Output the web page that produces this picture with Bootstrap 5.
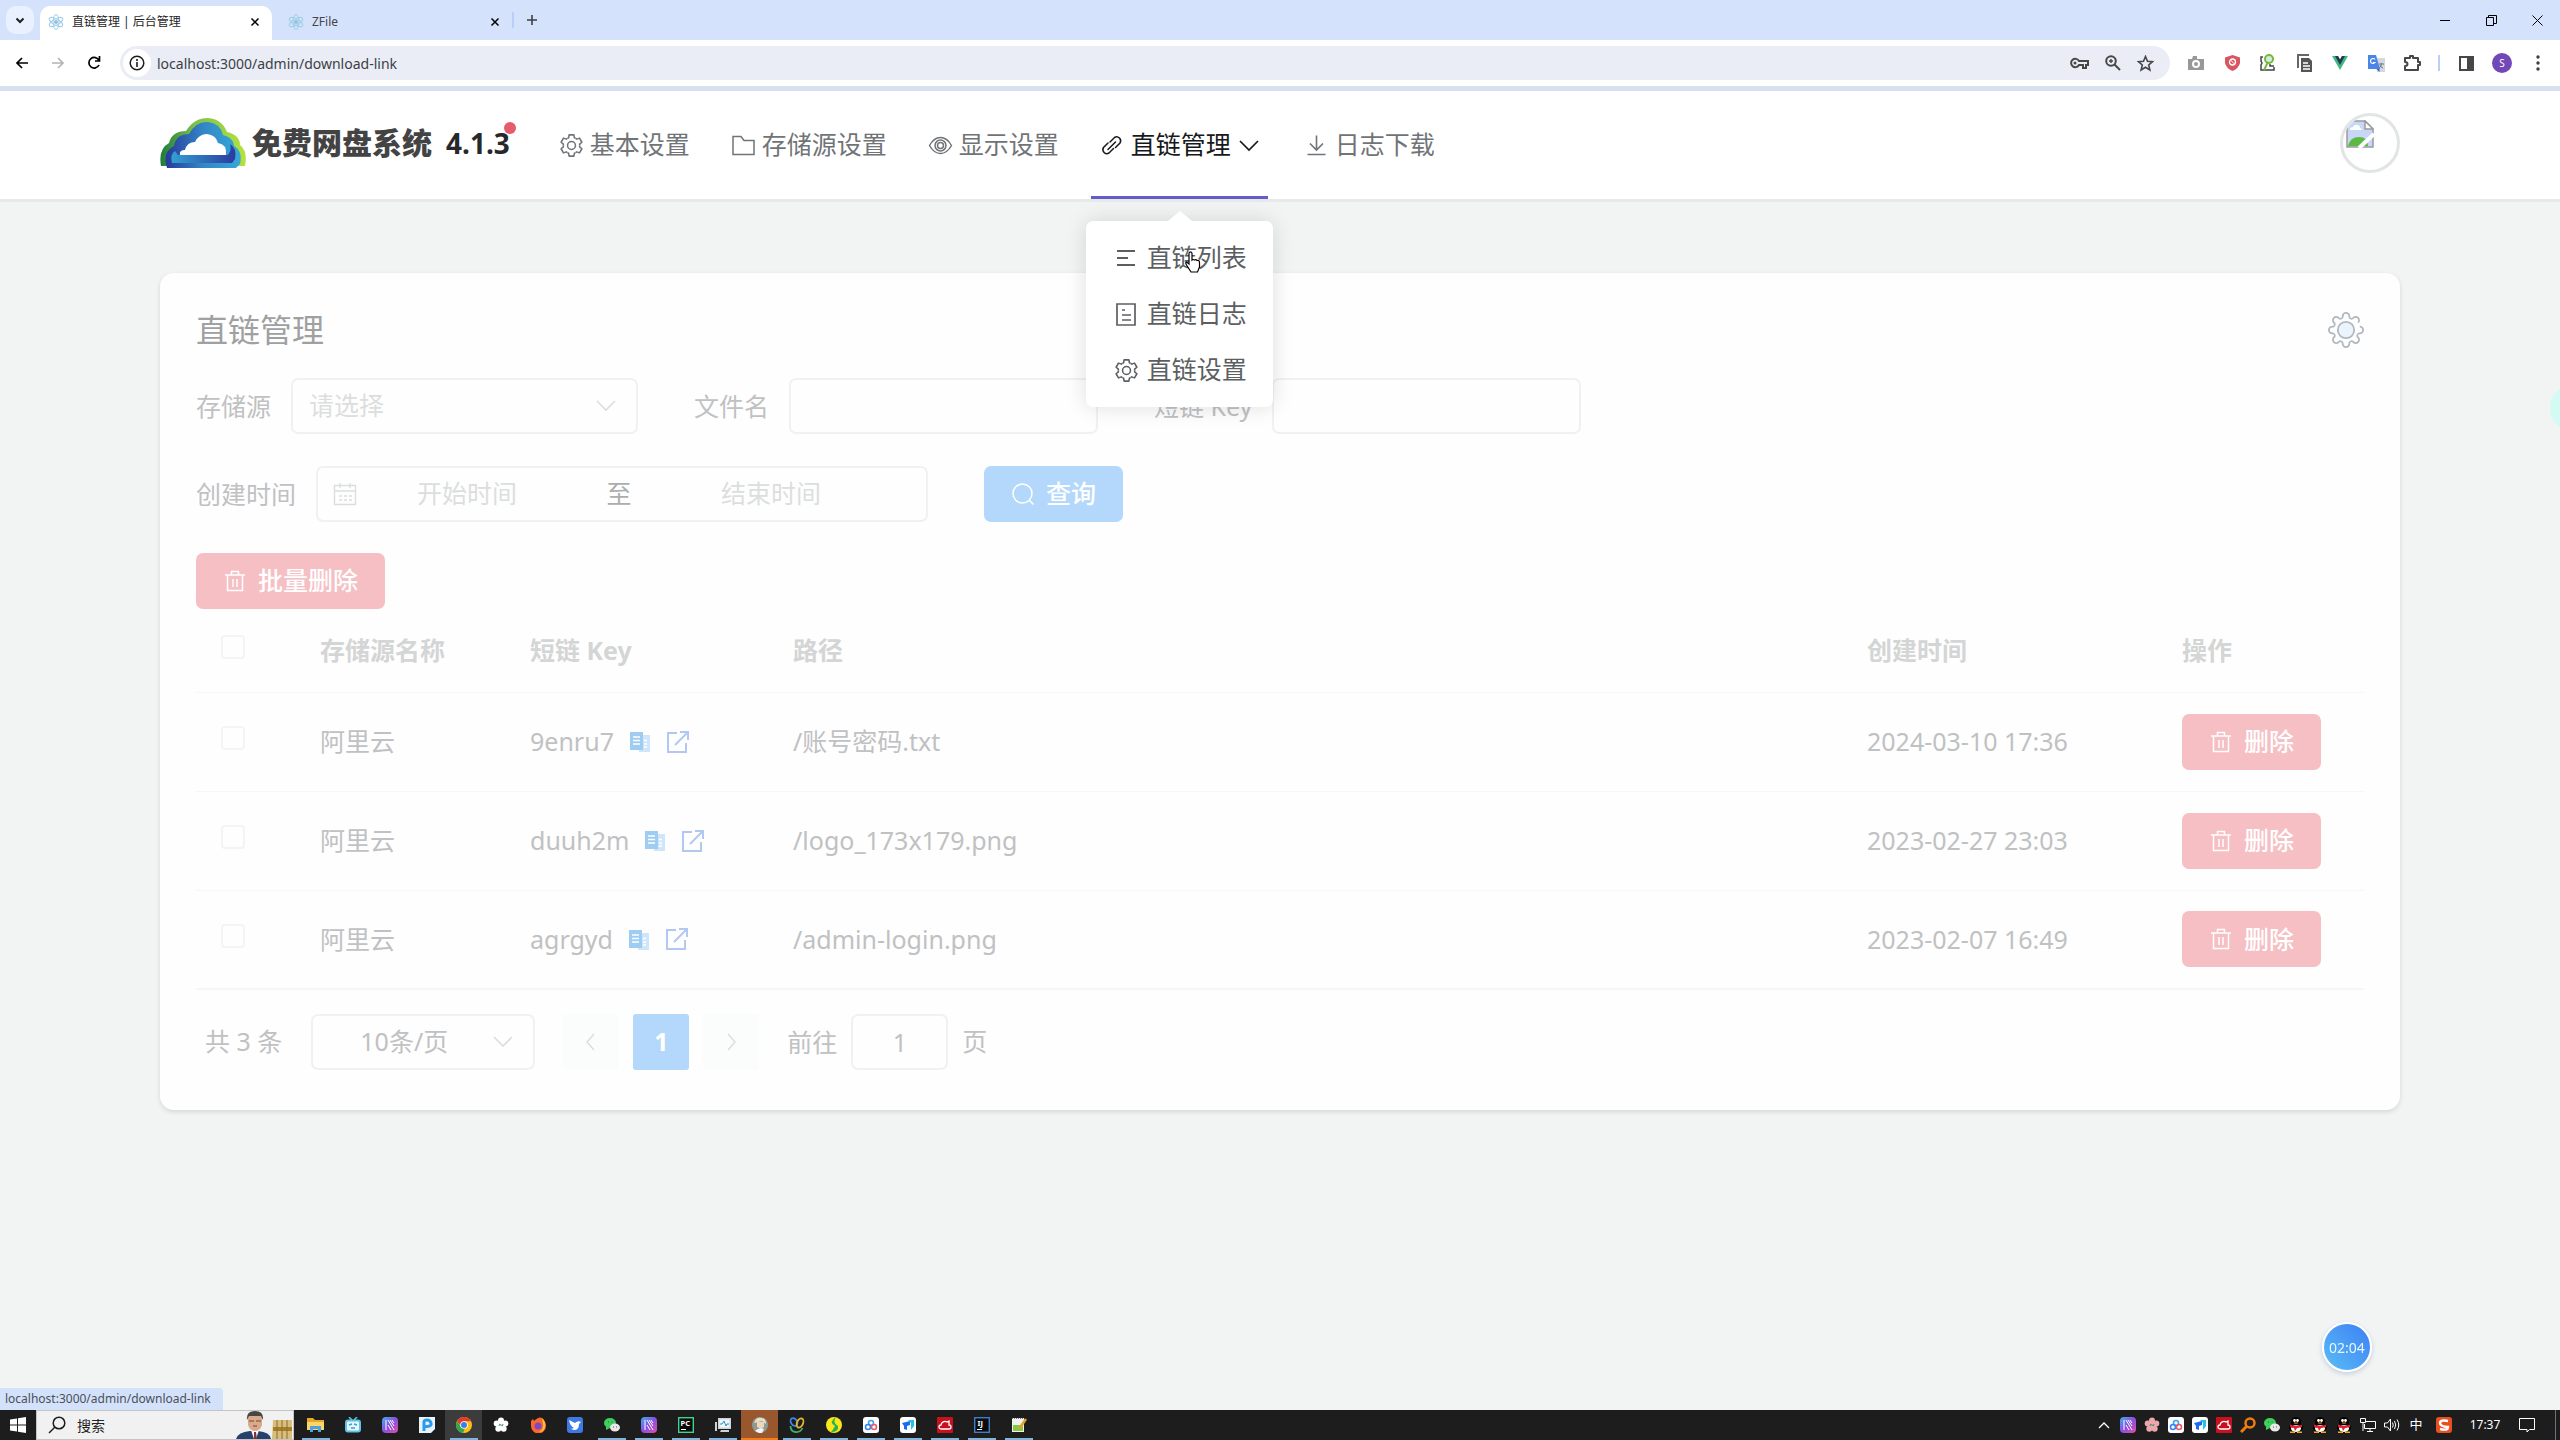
<!DOCTYPE html>
<html lang="zh-CN">
<head>
<meta charset="utf-8">
<meta name="viewport" content="width=device-width, initial-scale=1">
<title>直链管理 | 后台管理</title>
<link href="https://cdn.jsdelivr.net/npm/bootstrap@5.3.0/dist/css/bootstrap.min.css" rel="stylesheet">
<style>
:root{--ui:"Noto Sans","Noto Sans CJK SC",sans-serif}
body{font-family:var(--ui);background:#f2f4f4;color:#606266;overflow:hidden}
svg{display:block;flex:none}
button{border:0;background:none;padding:0}
a{text-decoration:none;color:inherit}
.ln{fill:none;stroke:currentColor;stroke-width:2}
/* browser frame */
.tabstrip{height:40px;background:#d5e2fb;padding-left:6px;font-size:12px;color:#43474d}
.tabmenu{width:28px;height:28px;border-radius:10px;background:#e8f1fd;color:#1f1f1f}
.btab{width:232px;height:34px;padding:0 8px 3px;gap:8px;border-radius:10px 10px 0 0}
.btab.on{background:#fff;color:#1f1f1f;margin-left:-6px}
.winbtn{width:46px;height:40px;color:#111}
.toolbar{height:46px;background:#fff;color:#474747}
.tbtn{width:36px;height:34px}
.omni{height:34px;border-radius:17px;background:#eaedf6;margin-left:8px;margin-right:8px;padding-left:3px}
.omni .info{width:28px;height:28px;border-radius:50%;background:#fff;color:#1f1f1f}
.omni input{border:0;background:none;outline:0;font-size:14px;color:#3b3f45;padding:0 0 0 6px}
.vr2{width:2px;height:16px;background:#b9cffa}
.edge{height:5px;background:#d5e0f0}
.who{width:20px;height:20px;border-radius:50%;background:#7248b9;color:#fff;font-size:10px}
/* site header */
.site{background:#fff;height:111px;border-bottom:3px solid #e6e8ea}
.wrap{width:87.5%;margin:0 auto}
.brand{font-weight:900;color:#434343;line-height:40px;gap:6px}
.brand-cn{font-size:30px}
.ver{font-size:28px;font-weight:700;color:#26282c;line-height:40px;margin-left:14px}
.ver i{width:12px;height:12px;border-radius:50%;background:#e55c6b;right:-6px;top:-1px}
.menu{gap:23px;font-size:25px;color:#707477;margin-left:40px}
.menu-item{height:108px;padding:3px 9px 0;gap:6px;position:relative;border-bottom:3px solid transparent}
.menu-item.on{color:#17191c;border-color:#665cc9}
.avatar2{width:60px;height:60px;border:3px solid #e2e5e6;border-radius:50%;overflow:hidden;padding:4px 0 0 3px}
/* drop menu */
.pop{left:-5px;top:130px;width:187px;background:#fff;border-radius:7px;padding:9px 0;box-shadow:0 0 21px rgba(0,0,0,.13);z-index:5;color:#5c5f62}
.pop:before{content:"";position:absolute;left:82px;top:-10px;border:12px solid transparent;border-top:0;border-bottom:10px solid #fff}
.pop a{height:56px;padding-left:28px;gap:8px}
.hand{left:98px;top:30px}
/* main panel */
.panel{background:#fefefe;border-radius:14px;margin-top:71px;padding:36px 36px 40px;box-shadow:0 2px 5px rgba(0,0,0,.12);font-size:25px;color:#c0c1c2}
.panel h1{font-size:32px;line-height:42px;color:#9fa0a1;font-weight:400}
.panel label{line-height:38px}
.box,.box.form-select,.box.form-control{height:56px;border:2px solid #f0f1f1;border-radius:7px;background-color:#fefefe;font-size:25px;color:#dcdede;box-shadow:none}
.box.form-select{padding:0 40px 0 16px;background-image:url("data:image/svg+xml,%3Csvg xmlns='http://www.w3.org/2000/svg' viewBox='0 0 20 20'%3E%3Cpath d='M1 5l9 9 9-9' fill='none' stroke='%23dcdddd' stroke-width='1.6'/%3E%3C/svg%3E");background-size:20px 20px;background-position:right 20px center}
.src{width:347px}.txt{width:309px}
.range{width:612px;padding-left:15px}
.range input{width:204px;border:0;outline:0;background:none;text-align:center;margin:0;font-size:25px}
.range input::placeholder{color:#dcdede;opacity:1}
.range .to{width:100px;text-align:center;color:#acadad}
.act{height:56px;border-radius:7px;color:#fff;font-size:25px;font-weight:500;padding:0 27px;gap:11px}
.blue{background:#b3d8fb}.red{background:#f5bfc4}
.fields{gap:56px}
.fields .pair{gap:20px}
.grid{table-layout:fixed;width:100%;margin:0;border-collapse:collapse}
.grid th,.grid td{padding:0 21px;vertical-align:middle;border-bottom:1px solid #f6f7f7;text-align:left}
.grid th{height:83px;font-weight:700;color:#d4d5d5}
.grid td{height:99px;white-space:nowrap}
.grid tr:last-child td{border-bottom:2px solid #f5f6f6}
.grid .form-check-input{display:block;width:24px;height:24px;margin:0 0 7px 4px;border:2px solid #f3f4f4;border-radius:4px;background-color:#fefefe}
.c1{width:103px}.c2{width:210px}.c3{width:263px}.c5{width:315px}.c6{width:203px}
.pager{padding-left:9px;margin-top:24px}
.pgbtn{width:56px;height:56px;border-radius:3px;background:#fbfcfc;color:#dcdddd}
.pgbtn.on{background:#b3d8fb;color:#fff;font-weight:700}
.box.size{width:224px;padding:0 40px 0 47px;color:#c0c1c2}
.box.jump{width:97px;text-align:center;color:#c0c1c2}
/* overlays */
.timer{right:188px;bottom:68px;width:50px;height:50px;border-radius:50%;border:2px solid #fff;background:linear-gradient(45deg,#59bdf5,#3d7ff5);color:#e8f5ff;font-size:14px;box-shadow:0 2px 5px rgba(60,90,160,.25)}
.blob{right:-38px;top:384px;width:48px;height:48px;border-radius:50%;background:#d3fbf3}
.status{left:0;bottom:30px;height:22px;background:#d3e2fa;border-radius:0 4px 0 0;font-size:12px;line-height:22px;padding:0 12px 0 5px;color:#4a5058}
/* taskbar */
.task{height:30px;background:#1d1d1d;color:#fff}
.find{width:258px;background:#f1f1f1;color:#1b1b1b;border:1px solid #c4c4c4;padding-left:11px}
.find input{border:0;outline:0;background:none;font-size:14px;width:170px;padding:0 0 0 11px}
.find input::placeholder{color:#222;opacity:1}
.app{width:37px;height:30px;position:relative}
.app.run:after{content:"";position:absolute;left:5px;right:4px;bottom:0;height:2px;background:#7fb6e0}
.app.cur{background:#3c3c3c}.app.alert2{background:#98572c;box-shadow:inset 0 -2px #f57b12}
.tray{width:24px;height:30px}
.clock{font-size:12px;width:50px}
</style>
<script src="https://cdn.jsdelivr.net/npm/bootstrap@5.3.0/dist/js/bootstrap.bundle.min.js" defer></script>
</head>
<body class="d-flex flex-column min-vh-100 position-relative">
<svg width="0" height="0" class="position-absolute" aria-hidden="true">
<defs>
<path id="tooth" d="M-3.9-6.8L-2.8-7.4-2.3-10.2H2.3L2.8-7.4 3.9-6.8"/>
<path id="lobe" d="M-4.8-11.6Q-3.4-11.6-3.3-13.8A3.3 3.3 0 0 1 3.3-13.8Q3.4-11.6 4.8-11.6"/>
<linearGradient id="lg1"><stop offset="0" stop-color="#1d7c3c"/><stop offset=".4" stop-color="#7cc04a"/><stop offset="1" stop-color="#b6e23f"/></linearGradient>
<linearGradient id="lg2"><stop offset="0" stop-color="#27399b"/><stop offset=".5" stop-color="#3486c6"/><stop offset="1" stop-color="#36a9d8"/></linearGradient>
<linearGradient id="lg3"><stop offset="0" stop-color="#33a0d3"/><stop offset="1" stop-color="#2b3b9e"/></linearGradient>
<linearGradient id="lg4" x2="1" y2="1"><stop offset="0" stop-color="#3fb0f2"/><stop offset=".5" stop-color="#8a4fe0"/><stop offset="1" stop-color="#e04fa8"/></linearGradient>
<symbol id="gear" viewBox="-12 -12 24 24"><g class="ln" style="stroke-width:1.5" stroke-linejoin="round"><use href="#tooth"/><use href="#tooth" transform="rotate(60)"/><use href="#tooth" transform="rotate(120)"/><use href="#tooth" transform="rotate(180)"/><use href="#tooth" transform="rotate(240)"/><use href="#tooth" transform="rotate(300)"/><circle r="3.8"/></g></symbol>
<symbol id="trash" viewBox="0 0 24 24"><path class="ln" style="stroke-width:1.5" d="M2 6h20M4.500 6v15.500h15V6M8.500 6V2.500h7V6M10 10v8M14 10v8"/></symbol>
<symbol id="copy" viewBox="0 0 20 21"><path fill="#cfe6fa" d="M9 4h11v17H9z"/><path fill="#9fccf3" d="M0 1h13v18H0z"/><path stroke="#fff" stroke-width="1.500" d="M3 6h7M3 9.500h7M3 13h7M14 9.500h3M14 13h3M14 16h3"/></symbol>
<symbol id="ext" viewBox="0 0 24 24"><path class="ln" d="M11 3H2v19h18V13M14 2h8v8M22 2L9 15"/></symbol>
<symbol id="atom" viewBox="0 0 16 16"><g fill="none" stroke="#9fcfe8" stroke-width="1"><ellipse cx="8" cy="8" rx="7.500" ry="3" transform="rotate(30 8 8)"/><ellipse cx="8" cy="8" rx="7.500" ry="3" transform="rotate(90 8 8)"/><ellipse cx="8" cy="8" rx="7.500" ry="3" transform="rotate(150 8 8)"/></g><circle cx="8" cy="8" r="2" fill="#8fc0e2"/></symbol>
<symbol id="xx" viewBox="0 0 10 10"><path d="M1.500 1.500l7 7M8.500 1.500l-7 7" stroke="currentColor" stroke-width="1.500"/></symbol>
<symbol id="wave" viewBox="0 0 16 16"><rect width="16" height="16" rx="4" fill="url(#lg4)"/><path d="M4 3v10M6 3l6 10M6 8l3 5M8 3l4 6M10 3l2 3" stroke="#fff" stroke-width="1"/></symbol>
<symbol id="wechat" viewBox="0 0 16 16"><ellipse cx="6" cy="6" rx="6" ry="5" fill="#3ecf5c"/><path d="M2 9l0 4 4-2z" fill="#3ecf5c"/><ellipse cx="11" cy="10.500" rx="5" ry="4" fill="#e9e9e9"/><path d="M4 5h1M7.500 5h1M9 10h1M12 10h1" stroke="#555" stroke-width="1.200"/></symbol>
<symbol id="tri" viewBox="0 0 16 16"><rect width="16" height="16" rx="3" fill="#fff"/><g fill="none" stroke-width="1.600"><circle cx="8" cy="6" r="2.500" stroke="#35a7f5"/><circle cx="5" cy="10" r="2.500" stroke="#2f86f2"/><circle cx="11" cy="10" r="2.500" stroke="#e95a6a"/></g></symbol>
<symbol id="todesk" viewBox="0 0 16 16"><rect width="16" height="16" rx="3" fill="#fff"/><path d="M2 6l8-2v4l-3 1v4l-3-1V9z" fill="#1c6cf0"/><path d="M8 3h6v6l-3 4V6z" fill="#26c2e6"/></symbol>
<symbol id="redc" viewBox="0 0 16 16"><rect width="16" height="16" rx="1" fill="#c8101e"/><path d="M4 12a2 2 0 0 1 0-4 4 4 0 0 1 6-3l2-1v4a2 2 0 0 1 0 4z" fill="none" stroke="#fff" stroke-width="1.300"/></symbol>
<symbol id="qq" viewBox="0 0 16 16"><ellipse cx="8" cy="5" rx="5" ry="5" fill="#000"/><ellipse cx="8" cy="10.500" rx="7" ry="4.800" fill="#000"/><ellipse cx="8" cy="11.500" rx="5" ry="3.500" fill="#fff"/><path d="M2 7.500q6 2.500 12 0v2.500q-4 1-5 1l-2 3-1-3q-2 0-4-1z" fill="#e01e2c"/><circle cx="6.500" cy="3.500" r="1.400" fill="#fff"/><circle cx="9.500" cy="3.500" r="1.400" fill="#fff"/><path d="M6 6h4" stroke="#f4a81d" stroke-width="1"/><path d="M2 15.300h5M9 15.300h5" stroke="#f4a81d" stroke-width="1.400"/></symbol>
<symbol id="flower" viewBox="0 0 16 16"><g fill="currentColor"><circle cx="8" cy="3.500" r="3"/><circle cx="12.300" cy="6.600" r="3"/><circle cx="10.700" cy="11.700" r="3"/><circle cx="5.300" cy="11.700" r="3"/><circle cx="3.700" cy="6.600" r="3"/><circle cx="8" cy="8" r="4"/></g><path d="M6 9q0-3 2-1t2-1" fill="none" stroke="#3a8f7a" stroke-width="1"/></symbol>
</defs>
</svg>

<div class="tabstrip d-flex align-items-center">
  <button class="tabmenu d-flex align-items-center justify-content-center" aria-label="搜索标签页"><svg width="12" height="12" viewBox="0 0 12 12"><path class="ln" d="M2.500 4.500L6 8l3.500-3.500"/></svg></button>
  <div class="d-flex align-self-end ms-2 ps-1">
    <div class="btab on d-flex align-items-center"><svg width="16" height="16"><use href="#atom"/></svg><span class="flex-grow-1">直链管理 | 后台管理</span><button aria-label="关闭"><svg width="10" height="10" class="me-1"><use href="#xx"/></svg></button></div>
    <div class="btab d-flex align-items-center ms-1"><svg width="16" height="16" class="ms-1"><use href="#atom"/></svg><span class="flex-grow-1">ZFile</span><button aria-label="关闭"><svg width="10" height="10"><use href="#xx"/></svg></button></div>
  </div>
  <span class="vr2 ms-1"></span>
  <button class="ms-2 ps-1" aria-label="新标签页"><svg width="12" height="12" viewBox="0 0 12 12"><path d="M6 1v10M1 6h10" stroke="#3c4043" stroke-width="1.600"/></svg></button>
  <div class="ms-auto d-flex">
    <button class="winbtn d-flex align-items-center justify-content-center" aria-label="最小化"><svg width="10" height="10"><path d="M0 5.500h10" stroke="#000"/></svg></button>
    <button class="winbtn d-flex align-items-center justify-content-center" aria-label="还原"><svg width="11" height="11"><path d="M.5 2.500h7v8h-7zM2.500 2.500v-2h8v8h-3" fill="none" stroke="#000"/></svg></button>
    <button class="winbtn d-flex align-items-center justify-content-center" aria-label="关闭窗口"><svg width="11" height="11"><path d="M.5.500l10 10M10.500.500l-10 10" stroke="#000"/></svg></button>
  </div>
</div>
<div class="toolbar d-flex align-items-center px-1">
  <button class="tbtn d-flex align-items-center justify-content-center" aria-label="后退"><svg width="14" height="14" viewBox="0 0 14 14"><path class="ln" style="stroke-width:1.700" d="M13 7H2M7 2L2 7l5 5"/></svg></button>
  <button class="tbtn d-flex align-items-center justify-content-center" style="color:#b4b4b4" aria-label="前进"><svg width="14" height="14" viewBox="0 0 14 14"><path class="ln" style="stroke-width:1.700" d="M1 7h11M7 2l5 5-5 5"/></svg></button>
  <button class="tbtn d-flex align-items-center justify-content-center" aria-label="刷新"><svg width="14" height="14" viewBox="0 0 14 14"><path class="ln" style="stroke-width:1.700" d="M12 9A5.300 5.300 0 1 1 12 4.500M12.500 0v5H8"/></svg></button>
  <div class="omni flex-grow-1 d-flex align-items-center">
    <span class="info d-flex align-items-center justify-content-center"><svg width="16" height="16" viewBox="0 0 16 16"><circle class="ln" style="stroke-width:1.500" cx="8" cy="8" r="6.800"/><path d="M8 7v5M8 4v2" stroke="currentColor" stroke-width="1.600"/></svg></span>
    <input class="flex-grow-1" value="localhost:3000/admin/download-link" aria-label="地址">
    <div class="d-flex align-items-center me-3 gap-3">
      <svg width="19" height="12" viewBox="0 0 19 12"><path class="ln" d="M9 4h9v4h-2v3h-3V8H9a4.200 4.200 0 1 1 0-4z"/><circle cx="5" cy="6" r="1.500" fill="currentColor"/></svg>
      <svg width="16" height="16" viewBox="0 0 16 16"><path class="ln" d="M9.500 9.500L15 15"/><circle class="ln" cx="6" cy="6" r="4.800"/><path d="M6 4v4M4 6h4" stroke="currentColor" stroke-width="1.400"/></svg>
      <svg width="17" height="17" viewBox="0 0 17 17"><path class="ln" style="stroke-width:1.600" d="M8.500 1.500l2 4.800 5 .4-3.800 3.300 1.200 5-4.400-2.700L4.100 15l1.200-5L1.500 6.700l5-.4z"/></svg>
    </div>
  </div>
  <span class="tbtn d-flex align-items-center justify-content-center"><svg width="16" height="16" viewBox="0 0 16 16"><path fill="#989898" d="M0 4h4l1-3h4v3h7v11H0z"/><circle cx="8" cy="9" r="3" fill="none" stroke="#fff" stroke-width="2"/></svg></span>
  <span class="tbtn d-flex align-items-center justify-content-center"><svg width="15" height="16" viewBox="0 0 15 16"><path fill="#d95560" d="M7.500 0L15 2.500V8q-1 5-7.500 8Q1 13 0 8V2.500z"/><circle cx="7.500" cy="7" r="3" fill="none" stroke="#fff" stroke-width="1.300"/><path d="M5.500 5l4 4" stroke="#fff"/></svg></span>
  <span class="tbtn d-flex align-items-center justify-content-center"><svg width="16" height="18" viewBox="0 0 16 18"><path d="M3 3H1v4l1 2-1 2v5h13v-3M10 10v2h4" fill="none" stroke="#444" stroke-width="1.500"/><circle cx="9" cy="5" r="4" fill="#d3ecd9" stroke="#76b83a" stroke-width="2"/><path d="M7.500 9L4 16" stroke="#76b83a" stroke-width="2"/></svg></span>
  <span class="tbtn d-flex align-items-center justify-content-center"><svg width="15" height="18" viewBox="0 0 15 18"><path fill="none" stroke="#666" stroke-width="2" d="M1 14V1h11"/><path fill="#555" d="M4 4h8l3 3v11H4z"/><path stroke="#fff" stroke-width="1.500" d="M6 9h5M6 12h7M6 15h7"/></svg></span>
  <span class="tbtn d-flex align-items-center justify-content-center"><svg width="16" height="14" viewBox="0 0 16 14"><path fill="#42b883" d="M0 0h6l2 3.500L10 0h6L8 14z"/><path fill="#243b50" d="M3 0h3l2 3.500L10 0h3L8 9z"/></svg></span>
  <span class="tbtn d-flex align-items-center justify-content-center"><svg width="17" height="17" viewBox="0 0 17 17"><path fill="#d4d8de" d="M7 3h10v14H9z"/><path fill="#4a86e8" d="M0 0h8l4 14H0z"/><path d="M8.500 14l3 3v-3z" fill="#2f5fc0"/><path d="M7 4.500A2.500 2.500 0 1 0 7 7.500H5" fill="none" stroke="#fff" stroke-width="1.200"/><path d="M11 9h5M13.500 8q0 4-2.500 5M12 10q1 3 3 3" fill="none" stroke="#6d7a8c" stroke-width="1"/></svg></span>
  <span class="tbtn d-flex align-items-center justify-content-center"><svg width="18" height="18" viewBox="0 0 18 18"><path class="ln" stroke-linejoin="round" d="M2 4h5V2h3v2h5v4h2v3h-2v5H2v-4q2.500 0 2.500-2T2 8z"/></svg></span>
  <span class="vr2 mx-2"></span>
  <span class="tbtn d-flex align-items-center justify-content-center"><svg width="15" height="15" viewBox="0 0 15 15"><path class="ln" d="M1 1h13v13H1z"/><path fill="currentColor" d="M8 1h6v13H8z"/></svg></span>
  <span class="tbtn d-flex align-items-center justify-content-center"><span class="who d-flex align-items-center justify-content-center">S</span></span>
  <button class="tbtn d-flex align-items-center justify-content-center" aria-label="菜单"><svg width="4" height="16"><g fill="#3c4043"><circle cx="2" cy="2" r="1.700"/><circle cx="2" cy="8" r="1.700"/><circle cx="2" cy="14" r="1.700"/></g></svg></button>
</div>
<div class="edge"></div>

<header class="site">
  <div class="wrap d-flex align-items-center">
    <a href="#" class="brand d-flex align-items-center mb-1">
      <svg width="86" height="50" viewBox="0 0 86 50"><path fill="url(#lg1)" d="M1 48Q-2 31 9 25 12 13 26 13 34 0 48 0 62 1 67 14 80 17 80 27 88 33 85 48z"/><path fill="url(#lg2)" d="M7 50Q2 34 14 28 16 16 29 16 36 3 48 4 60 5 63 17 74 20 74 28 83 33 80 46L76 50z"/><path fill="url(#lg3)" d="M12 45Q10 36 15 33L18 37H68Q72 32 70 26 77 30 75 41L72 45z"/><path fill="#fff" d="M20 37Q19 32 25 32 27 24 35 24 39 16 47 16 56 17 58 25 67 26 66 37z"/></svg>
      <span class="brand-cn">免费网盘系统</span>
    </a>
    <span class="ver position-relative mb-1">4.1.3<i class="position-absolute"></i></span>
    <nav class="menu d-flex">
      <a href="#" class="menu-item d-flex align-items-center"><svg width="25" height="25"><use href="#gear"/></svg>基本设置</a>
      <a href="#" class="menu-item d-flex align-items-center"><svg width="25" height="25" viewBox="0 0 25 25"><path class="ln" style="stroke-width:1.500" d="M2 3.500h8l3 4h10v14H2z"/></svg>存储源设置</a>
      <a href="#" class="menu-item d-flex align-items-center"><svg width="25" height="25" viewBox="0 0 25 25"><path class="ln" style="stroke-width:1.500" d="M1.500 12.500Q6 4.500 12.500 4.500t11 8q-4.500 8-11 8t-11-8z"/><circle class="ln" style="stroke-width:1.500" cx="12.500" cy="12.500" r="5.500"/><circle class="ln" style="stroke-width:1.500" cx="12.500" cy="12.500" r="3"/></svg>显示设置</a>
      <div class="menu-item on d-flex align-items-center">
        <svg width="25" height="25" viewBox="0 0 25 25"><g class="ln" stroke-linecap="round" style="stroke-width:1.500"><path d="M8 16.500L15.500 9M10 9l4.500-4.500a4 4 0 0 1 5.500 5.500L15.500 14.500M13.500 15.500l-4.500 4.500A4 4 0 0 1 3.500 14.500l4.500-4.500"/></g></svg>直链管理
        <svg width="22" height="25" viewBox="0 0 22 25"><path class="ln" style="stroke-width:1.700" d="M3 8l9 9 9-9"/></svg>
        <div class="pop position-absolute">
          <a href="#" class="d-flex align-items-center"><svg width="25" height="25" viewBox="0 0 25 25"><path class="ln" d="M3 5h18M3 12h11M3 19h18"/></svg>直链列表</a>
          <a href="#" class="d-flex align-items-center"><svg width="25" height="25" viewBox="0 0 25 25"><path class="ln" style="stroke-width:1.700" d="M3 2h18v21H3zM8 8h3M8 13h9M8 18h9"/></svg>直链日志</a>
          <a href="#" class="d-flex align-items-center"><svg width="25" height="25"><use href="#gear"/></svg>直链设置</a>
          <svg class="hand position-absolute" width="18" height="22" viewBox="0 0 18 22"><path fill="#fff" stroke="#000" stroke-width="1.200" d="M5 13V2.500a1.500 1.500 0 0 1 3 0V9q1-1 2.500 0 1.500-.8 2.500.5 2.500-.5 2.500 2V16l-2 5H7l-4.500-7q-1.500-2.500 0-3z"/></svg>
        </div>
      </div>
      <a href="#" class="menu-item d-flex align-items-center ms-1"><svg width="25" height="25" viewBox="0 0 25 25"><path class="ln" style="stroke-width:1.600" d="M12.500 2.500V17M6 10.500l6.500 6.500 6.500-6.500M3.500 21.500h18"/></svg>日志下载</a>
    </nav>
    <a href="#" class="avatar2 ms-auto mb-1" aria-label="用户头像"><svg width="28" height="28" viewBox="0 0 28 28"><path fill="#c7d7f5" stroke="#9a9a9a" stroke-width="1.500" d="M1 1h18l8 8v18H1z"/><path fill="#fff" stroke="#9a9a9a" stroke-width="1.500" d="M19 1v8h8z"/><path fill="#fff" d="M4 10q0-3 3-3 1-3 4-2 3 0 3 3 2 0 2 2z"/><path fill="#5cb944" d="M2 26q2-9 11-9t9 9z"/><path stroke="#fff" stroke-width="4" d="M13 28L28 14"/></svg></a>
  </div>
</header>

<main class="wrap flex-grow-1">
  <section class="panel">
    <div class="d-flex justify-content-between align-items-center">
      <h1 class="m-0">直链管理</h1>
      <button aria-label="设置"><svg width="36" height="36" viewBox="-18 -18 36 36"><g fill="none" stroke="#b0b8c0" stroke-width="1.800"><use href="#lobe"/><path d="M-4.800-11.600Q-3.400-11.600-3.300-13.800A3.300 3.300 0 0 1 3.300-13.800" transform="rotate(45)"/><path d="M-3.300-13.800A3.300 3.300 0 0 1 3.300-13.800Q3.400-11.600 4.800-11.600" transform="rotate(90)"/><use href="#lobe" transform="rotate(135)"/><use href="#lobe" transform="rotate(180)"/><use href="#lobe" transform="rotate(225)"/><use href="#lobe" transform="rotate(270)"/><use href="#lobe" transform="rotate(315)"/><circle r="8.200" fill="#ebf4fd"/></g></svg></button>
    </div>
    <div class="fields d-flex align-items-center" style="margin-top:27px">
      <div class="pair d-flex align-items-center"><label for="src">存储源</label><select id="src" class="form-select box src"><option>请选择</option></select></div>
      <div class="pair d-flex align-items-center"><label for="fname">文件名</label><input id="fname" class="form-control box txt"></div>
      <div class="pair d-flex align-items-center"><label for="skey">短链 Key</label><input id="skey" class="form-control box txt"></div>
    </div>
    <div class="fields d-flex align-items-center" style="margin-top:32px">
      <div class="pair d-flex align-items-center"><label for="t1">创建时间</label>
        <div class="box range d-flex align-items-center"><svg width="24" height="24" viewBox="0 0 24 24" class="me-2"><path class="ln" style="stroke-width:1.400" stroke="#d9dada" d="M1.500 3.500h21v19h-21zM1.500 9h21M7 1v5M17 1v5M6 14h3M11 14h3M16 14h3M6 18h3M11 18h3M16 18h3"/></svg><input id="t1" placeholder="开始时间"><span class="to">至</span><input placeholder="结束时间" aria-label="结束时间"></div>
      </div>
      <button class="act blue d-flex align-items-center"><svg width="24" height="24" viewBox="0 0 24 24"><circle class="ln" style="stroke-width:1.500" cx="11.500" cy="11.500" r="9.500"/><path class="ln" style="stroke-width:1.500" d="M18 18l4.500 4.500"/></svg>查询</button>
    </div>
    <button class="act red d-flex align-items-center" style="margin-top:31px"><svg width="24" height="24"><use href="#trash"/></svg>批量删除</button>
    <table class="grid">
      <colgroup><col class="c1"><col class="c2"><col class="c3"><col><col class="c5"><col class="c6"></colgroup>
      <thead><tr><th><input type="checkbox" class="form-check-input" aria-label="全选"></th><th>存储源名称</th><th>短链 Key</th><th>路径</th><th>创建时间</th><th>操作</th></tr></thead>
      <tbody>
      <tr><td><input type="checkbox" class="form-check-input" aria-label="选择 9enru7"></td><td>阿里云</td><td><div class="d-flex align-items-center gap-3">9enru7<svg width="20" height="21"><use href="#copy"/></svg><a href="#" style="color:#b1c9f2" aria-label="打开"><svg width="24" height="24"><use href="#ext"/></svg></a></div></td><td>/账号密码.txt</td><td>2024-03-10 17:36</td><td><button class="act red d-flex align-items-center"><svg width="24" height="24"><use href="#trash"/></svg>删除</button></td></tr>
      <tr><td><input type="checkbox" class="form-check-input" aria-label="选择 duuh2m"></td><td>阿里云</td><td><div class="d-flex align-items-center gap-3">duuh2m<svg width="20" height="21"><use href="#copy"/></svg><a href="#" style="color:#b1c9f2" aria-label="打开"><svg width="24" height="24"><use href="#ext"/></svg></a></div></td><td>/logo_173x179.png</td><td>2023-02-27 23:03</td><td><button class="act red d-flex align-items-center"><svg width="24" height="24"><use href="#trash"/></svg>删除</button></td></tr>
      <tr><td><input type="checkbox" class="form-check-input" aria-label="选择 agrgyd"></td><td>阿里云</td><td><div class="d-flex align-items-center gap-3">agrgyd<svg width="20" height="21"><use href="#copy"/></svg><a href="#" style="color:#b1c9f2" aria-label="打开"><svg width="24" height="24"><use href="#ext"/></svg></a></div></td><td>/admin-login.png</td><td>2023-02-07 16:49</td><td><button class="act red d-flex align-items-center"><svg width="24" height="24"><use href="#trash"/></svg>删除</button></td></tr>
      </tbody>
    </table>
    <div class="pager d-flex align-items-center">
      <span>共 3 条</span>
      <select class="form-select box size" style="margin-left:29px" aria-label="每页条数"><option>10条/页</option></select>
      <div class="d-flex" style="gap:14px;margin:0 28px">
        <button class="pgbtn d-flex align-items-center justify-content-center" aria-label="上一页"><svg width="20" height="20" viewBox="0 0 20 20"><path class="ln" style="stroke-width:1.500" d="M13 2l-7 8 7 8"/></svg></button>
        <button class="pgbtn on d-flex align-items-center justify-content-center">1</button>
        <button class="pgbtn d-flex align-items-center justify-content-center" aria-label="下一页"><svg width="20" height="20" viewBox="0 0 20 20"><path class="ln" style="stroke-width:1.500" d="M7 2l7 8-7 8"/></svg></button>
      </div>
      <label for="jump">前往</label><input id="jump" class="form-control box jump" style="margin:0 14px" value="1"><span>页</span>
    </div>
  </section>
</main>

<footer class="task d-flex">
  <button class="d-flex align-items-center justify-content-center" style="width:36px" aria-label="开始"><svg width="16" height="16"><path fill="#fff" d="M0 2.500L7 1.500v6H0zM8 1.300L16 0v7.500H8zM0 8.500h7v6l-7-1zM8 8.500h8V16l-8-1.300z"/></svg></button>
  <div class="find d-flex align-items-center"><svg width="18" height="18" viewBox="0 0 18 18"><circle cx="11" cy="7" r="5.800" fill="none" stroke="#1b1b1b" stroke-width="1.500"/><path d="M7 11l-6 6" stroke="#1b1b1b" stroke-width="1.500"/></svg><input placeholder="搜索" aria-label="搜索">
    <svg width="57" height="28" viewBox="0 0 57 28"><path fill="#27406e" d="M0 28q2-7 14-8h8q12 1 13 8z"/><path fill="#fff" d="M15 19h8l-3 9h-2z"/><path fill="#8a2f35" d="M18 21h2l1 7h-3z"/><path fill="#d9a98a" d="M12 5h14v9q-2 6-7 6t-7-6z"/><path fill="#4a4644" d="M11 9q-1-9 8-9t8 9l-2-4H13z"/><path d="M13 10h5M20 10h5M17 15h4" stroke="#6b4a3a"/><path fill="#d8bd7c" d="M37 9h19v19H36z"/><path fill="#a67f2b" d="M37 16h19v4H37z"/><path d="M41 9v19M46 9v19M51 9v19" stroke="#8c6d33"/></svg>
  </div>
  <div class="d-flex" style="margin-left:3px">
    <span class="app run d-flex align-items-center justify-content-center"><svg width="17" height="16" viewBox="0 0 17 16"><path fill="#e8a82c" d="M0 1h6l2 2h9v10H0z"/><path fill="#fbd566" d="M0 5h17v8H0z"/><path fill="#4ba3e3" d="M3 9h11v6h-3v-3H6v3H3z"/></svg></span>
    <span class="app d-flex align-items-center justify-content-center"><svg width="16" height="16" viewBox="0 0 16 16"><path d="M4 0l3 3M12 0L9 3" stroke="#5cc3ea" stroke-width="1.500"/><rect x="1" y="3.500" width="14" height="11" rx="2" fill="#e8f7fd" stroke="#5cc3ea" stroke-width="2"/><path d="M4 8l3-1M12 8L9 7M6 11h4" stroke="#3aa0cc" stroke-width="1.400"/></svg></span>
    <span class="app d-flex align-items-center justify-content-center"><svg width="16" height="16"><use href="#wave"/></svg></span>
    <span class="app d-flex align-items-center justify-content-center"><svg width="16" height="16" viewBox="0 0 16 16"><path fill="#e9f3fb" d="M0 0h16v12l-4 4H0z"/><path d="M5 14V5q0-2 3-2t4 3-4 3.500H6" fill="none" stroke="#2b9ceb" stroke-width="3"/></svg></span>
    <span class="app cur run d-flex align-items-center justify-content-center"><svg width="16" height="16" viewBox="0 0 16 16"><circle cx="8" cy="8" r="8" fill="#fbc116"/><path fill="#e33b2e" d="M1 4.200A8 8 0 0 1 15 4.200H8L5 9z"/><path fill="#2da94f" d="M1 4.200L5 10l4 1-2 5A8 8 0 0 1 1 4.200z"/><circle cx="8" cy="8" r="3.800" fill="#fff"/><circle cx="8" cy="8" r="3" fill="#3b7ded"/></svg></span>
    <span class="app d-flex align-items-center justify-content-center" style="color:#fff"><svg width="16" height="16"><use href="#flower"/></svg></span>
    <span class="app d-flex align-items-center justify-content-center"><svg width="16" height="16" viewBox="0 0 16 16"><path fill="#f8682a" d="M1 4l2-2 1 2q5-5 8-3 4 3 4 8a7.500 7.500 0 0 1-15 0z"/><path fill="#fcc43c" d="M12 1q4 4 3 9t-6 5q5-3 4-8z"/><circle cx="8" cy="9" r="3.500" fill="#8046c9"/></svg></span>
    <span class="app d-flex align-items-center justify-content-center"><svg width="16" height="16" viewBox="0 0 16 16"><rect width="16" height="16" rx="3" fill="#3d7ae5"/><path fill="#fff" d="M2 3l6 3q3-3 6-1l-2 2q0 6-5 6l-3-1 3-1Q3 9 2 3z"/></svg></span>
    <span class="app run d-flex align-items-center justify-content-center"><svg width="16" height="16"><use href="#wechat"/></svg></span>
    <span class="app run d-flex align-items-center justify-content-center"><svg width="16" height="16"><use href="#wave"/></svg></span>
    <span class="app run d-flex align-items-center justify-content-center"><svg width="16" height="16" viewBox="0 0 16 16"><rect x=".7" y=".7" width="14.600" height="14.600" fill="#0c0c0c" stroke="#3fd38b" stroke-width="1.400"/><text x="2.500" y="9" font-size="7.500" font-weight="700" fill="#fff">PC</text><path d="M3 12.500h5" stroke="#fff"/></svg></span>
    <span class="app run d-flex align-items-center justify-content-center"><svg width="16" height="16" viewBox="0 0 16 16"><path fill="#cfd3d6" d="M3 1h13v11H3zM6 13h8v2H5zM0 5h2v9H0z"/><path fill="#eef8fc" d="M4.500 2.500h10v8h-10z"/><path d="M5 7h2l2-3 2 5 1-2h2" fill="none" stroke="#2b8fc4"/></svg></span>
    <span class="app alert2 d-flex align-items-center justify-content-center"><svg width="16" height="16" viewBox="0 0 16 16"><circle cx="8" cy="8" r="8" fill="#8e9a92"/><path fill="#f0d5bd" d="M5 5h7v5l-3 2-4-2z"/><path fill="#e9dfc8" d="M2 6q2-6 7-5 5 0 5 6l-4-3-4 1z"/><path fill="#f4f4f4" d="M3 14q4-4 9-2l-2 4H7z"/></svg></span>
    <span class="app run d-flex align-items-center justify-content-center"><svg width="16" height="16" viewBox="0 0 16 16"><g fill="none" stroke-width="1.800"><ellipse cx="5" cy="5" rx="3" ry="4.200" stroke="#3f86ee" transform="rotate(-35 5 5)"/><ellipse cx="11" cy="6" rx="3" ry="4.800" stroke="#e8b62a" transform="rotate(25 11 6)"/><path stroke="#37b36a" d="M1.500 9q0 5.500 5 6t7-4"/></g></svg></span>
    <span class="app run d-flex align-items-center justify-content-center"><svg width="16" height="16" viewBox="0 0 16 16"><circle cx="8" cy="8" r="8" fill="#fbe51c"/><path fill="#28b34a" d="M10 0Q2 5 9 9 7 13 5 15q8 0 7-6Q6 6 10 0z"/></svg></span>
    <span class="app run d-flex align-items-center justify-content-center"><svg width="16" height="16"><use href="#tri"/></svg></span>
    <span class="app run d-flex align-items-center justify-content-center"><svg width="16" height="16"><use href="#todesk"/></svg></span>
    <span class="app run d-flex align-items-center justify-content-center"><svg width="16" height="16"><use href="#redc"/></svg></span>
    <span class="app run d-flex align-items-center justify-content-center"><svg width="16" height="16" viewBox="0 0 16 16"><rect x=".7" y=".7" width="14.600" height="14.600" fill="#0c0c0c" stroke="#3f7fc9" stroke-width="1.400"/><text x="3.500" y="9" font-size="7.500" font-weight="700" fill="#fff">IJ</text><path d="M3 12.500h5" stroke="#fff"/></svg></span>
    <span class="app run d-flex align-items-center justify-content-center"><svg width="16" height="16" viewBox="0 0 16 16"><path fill="#f3f3ee" d="M1 1h12v14H1z"/><path fill="#86c947" d="M2 8h10v6H2z"/><path stroke="#777" stroke-dasharray="1 1" d="M1 1.500h12"/><path stroke="#e0a32c" stroke-width="2.500" d="M15 2L8 12"/></svg></span>
  </div>
  <div class="ms-auto d-flex">
    <span class="tray d-flex align-items-center justify-content-center"><svg width="12" height="8"><path d="M1 7l5-5 5 5" fill="none" stroke="#fff" stroke-width="1.300"/></svg></span>
    <span class="tray d-flex align-items-center justify-content-center"><svg width="16" height="16"><use href="#wave"/></svg></span>
    <span class="tray d-flex align-items-center justify-content-center" style="color:#eba7ab"><svg width="16" height="16"><use href="#flower"/></svg></span>
    <span class="tray d-flex align-items-center justify-content-center"><svg width="16" height="16"><use href="#tri"/></svg></span>
    <span class="tray d-flex align-items-center justify-content-center"><svg width="16" height="16"><use href="#todesk"/></svg></span>
    <span class="tray d-flex align-items-center justify-content-center"><svg width="16" height="16"><use href="#redc"/></svg></span>
    <span class="tray d-flex align-items-center justify-content-center"><svg width="16" height="16" viewBox="0 0 16 16"><circle cx="10" cy="6" r="4.500" fill="none" stroke="#ef7d12" stroke-width="2.500"/><path d="M7 9l-6 6" stroke="#ef7d12" stroke-width="3"/></svg></span>
    <span class="tray d-flex align-items-center justify-content-center"><svg width="16" height="16"><use href="#wechat"/></svg></span>
    <span class="tray d-flex align-items-center justify-content-center"><svg width="16" height="16"><use href="#qq"/></svg></span>
    <span class="tray d-flex align-items-center justify-content-center"><svg width="16" height="16"><use href="#qq"/></svg></span>
    <span class="tray d-flex align-items-center justify-content-center"><svg width="16" height="16"><use href="#qq"/></svg></span>
    <span class="tray d-flex align-items-center justify-content-center"><svg width="16" height="14"><path d="M5 3.500h10.500v7H4.500V6M.5.500h5v4h-5zM3 4.500V13M7 13.500h6M10 11v2" fill="none" stroke="#fff"/></svg></span>
    <span class="tray d-flex align-items-center justify-content-center"><svg width="16" height="14"><path d="M.5 5h3l3-4v12l-3-4h-3zM8.500 4.500q1.500 2.500 0 5M10.500 3q2.500 4 0 8M13 1.500q3.500 5.500 0 11" fill="none" stroke="#fff"/></svg></span>
    <span class="tray d-flex align-items-center justify-content-center" style="font-size:13px">中</span>
    <span class="d-flex align-items-center justify-content-center" style="width:32px"><svg width="16" height="16" viewBox="0 0 16 16"><rect width="16" height="16" rx="3" fill="#e9501f"/><path d="M12 4Q4 2.500 4 6t8 4q0 4-8 2" fill="none" stroke="#fff" stroke-width="2.400"/></svg></span>
    <span class="clock d-flex align-items-center justify-content-center">17:37</span>
    <span class="d-flex align-items-center justify-content-center" style="width:34px"><svg width="16" height="16"><path d="M.5 1.500h15v11h-5l-2.500 2.500v-2.500h-7.500z" fill="none" stroke="#fff"/></svg></span>
    <span class="border-end border-secondary" style="width:12px;margin-right:4px"></span>
  </div>
</footer>
<div class="blob position-fixed"></div>
<div class="timer position-fixed d-flex align-items-center justify-content-center">02:04</div>
<div class="status position-fixed">localhost:3000/admin/download-link</div>
</body>
</html>
